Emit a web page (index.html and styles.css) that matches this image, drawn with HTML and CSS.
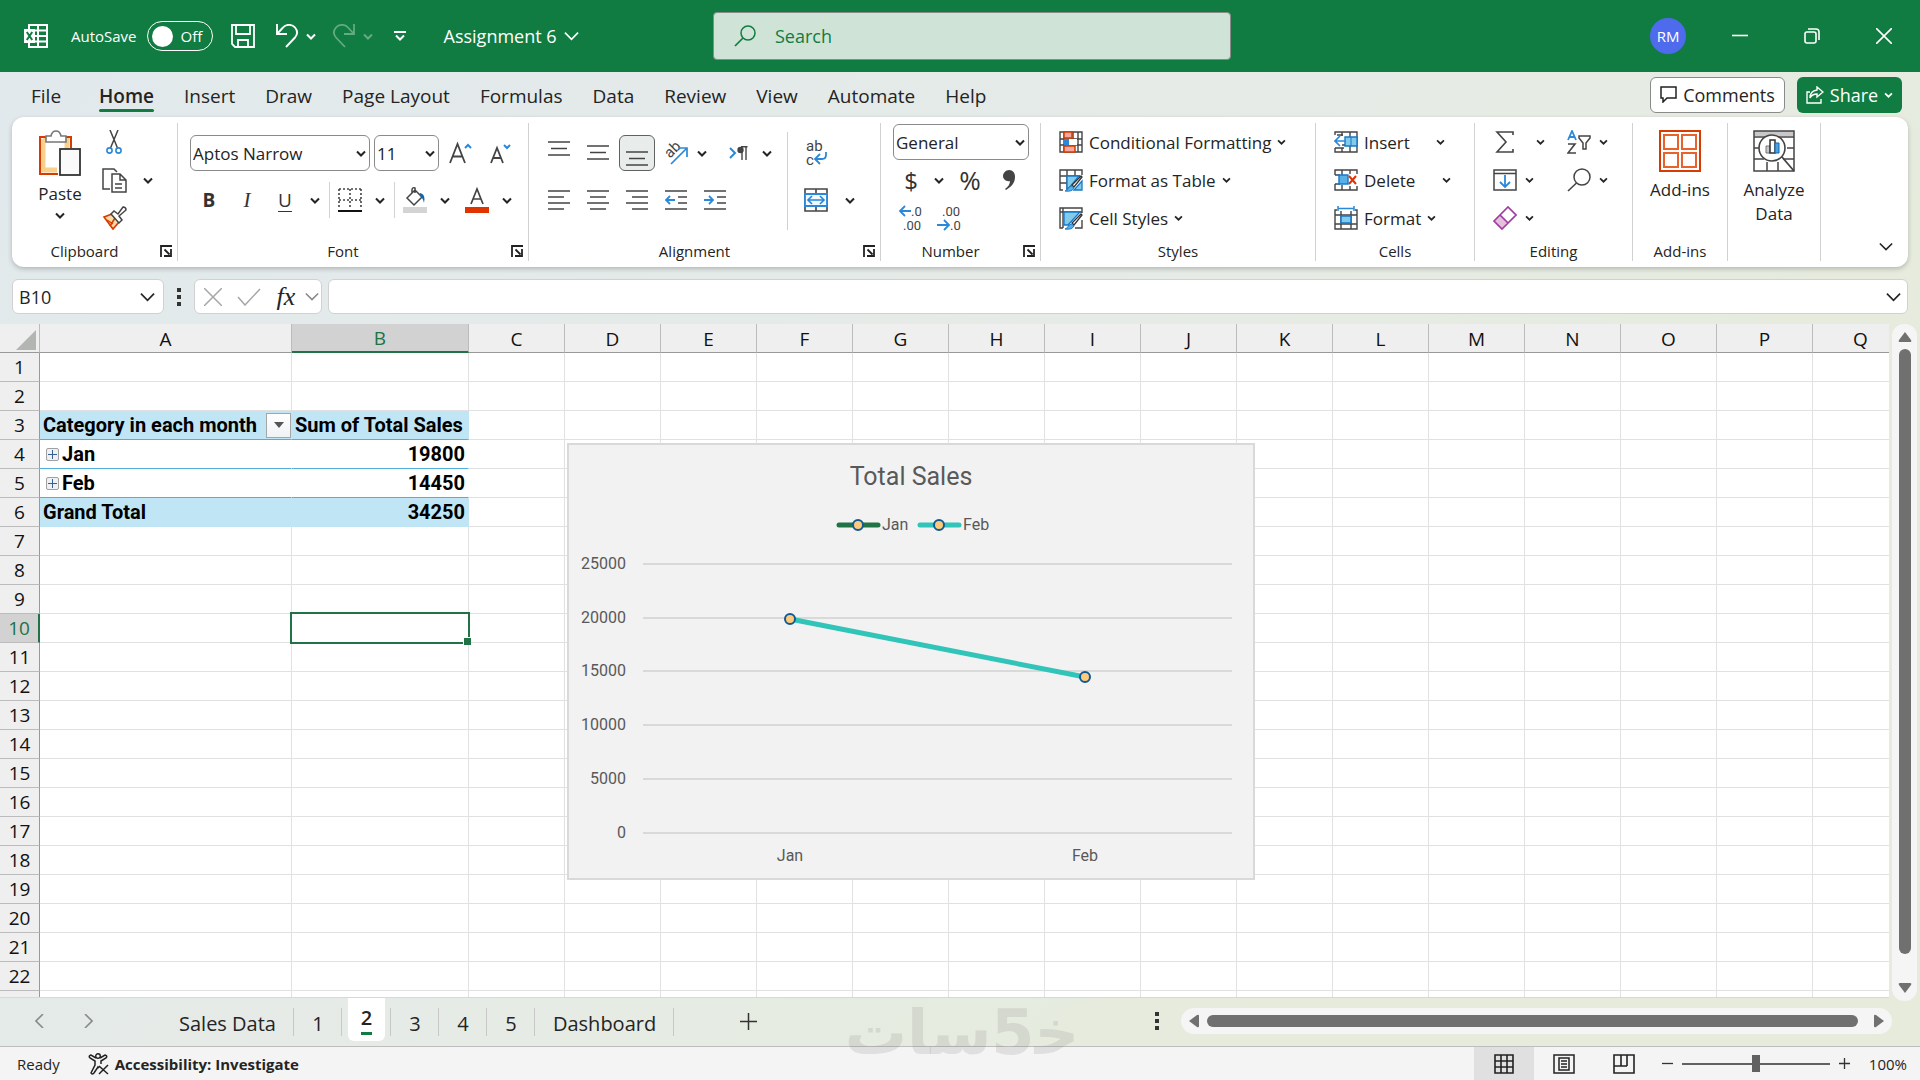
FILE: index.html
```html
<!DOCTYPE html>
<html lang="en">
<head>
  <meta charset="UTF-8">
  <meta name="viewport" content="width=device-width, initial-scale=1.0">
  <title>Assignment 6 - Excel</title>
  <link rel="stylesheet" href="styles.css">
</head>
<body>
  <!-- Shared icons -->
  <svg class="sprite" aria-hidden="true">
    <symbol id="chev" viewBox="0 0 10 7"><path d="M1 1.5l4 4 4-4" fill="none" stroke="currentColor" stroke-width="2"/></symbol>
    <symbol id="chev-big" viewBox="0 0 16 10"><path d="M1 1.5l7 7 7-7" fill="none" stroke="currentColor" stroke-width="1.8"/></symbol>
    <symbol id="launcher" viewBox="0 0 12 12"><path d="M1 12V1h11M4.5 4.5l5 5M11 4v7H4" fill="none" stroke="#222" stroke-width="1.8"/></symbol>
  </svg>

  <header class="title-bar">
    <div class="title-left">
      <svg class="excel-logo" width="24" height="24" viewBox="0 0 24 24"><path d="M5 1h18v22H5zM5 6.500h18M5 12h18M5 17.500h18M14 1v22" fill="none" stroke="#fff" stroke-width="2"/><path d="M0 5h11v14H0z" fill="#fff"/><path d="M2.800 8l5.400 8M8.200 8l-5.400 8" stroke="#107c41" stroke-width="2"/></svg>
      <label class="autosave">AutoSave
        <input type="checkbox" class="toggle-input">
        <span class="toggle"><span class="knob"></span>Off</span>
      </label>
      <button class="title-btn" aria-label="Save"><svg width="24" height="24" viewBox="0 0 24 24"><path d="M1 1h22v22H4l-3-3zM5 1v9h14V1M7 23v-7h10v7" fill="none" stroke="#fff" stroke-width="1.800"/></svg></button>
      <span class="title-split">
        <button class="title-btn" aria-label="Undo"><svg width="24" height="24" viewBox="0 0 24 24"><path d="M2 0v10h10M2 10l6-6.500C11 0 17 0 20 3.500s2.500 7 0 10L11 23" fill="none" stroke="#fff" stroke-width="1.900"/></svg></button>
        <button class="chev-btn" aria-label="Undo list"><svg width="10" height="7"><use href="#chev"/></svg></button>
      </span>
      <span class="title-split faded">
        <button class="title-btn" aria-label="Redo"><svg width="24" height="24" viewBox="0 0 24 24"><path d="M22 0v10H12M22 10l-6-6.500C13 0 7 0 4 3.500s-2.500 7 0 10L13 23" fill="none" stroke="#fff" stroke-width="1.800"/></svg></button>
        <button class="chev-btn" aria-label="Redo list"><svg width="10" height="7"><use href="#chev"/></svg></button>
      </span>
      <button class="title-btn customize" aria-label="Customize toolbar"><svg width="12" height="10" viewBox="0 0 12 10"><path d="M0 1h12M2 4.500l4 4 4-4" fill="none" stroke="#fff" stroke-width="2"/></svg></button>
      <button class="doc-name">Assignment 6 <svg width="15" height="10"><use href="#chev-big"/></svg></button>
    </div>
    <label class="search">
      <svg width="22" height="22" viewBox="0 0 22 22"><circle cx="14" cy="8" r="7" fill="none" stroke="#107c41" stroke-width="1.500"/><path d="M9 13l-8 8" stroke="#107c41" stroke-width="1.700"/></svg>
      <input type="text" placeholder="Search" aria-label="Search">
    </label>
    <div class="title-right">
      <button class="avatar">RM</button>
      <button class="win-btn" aria-label="Minimize"><svg width="16" height="16" viewBox="0 0 16 16"><path d="M0 7.500h16" stroke="#fff" stroke-width="1.600"/></svg></button>
      <button class="win-btn" aria-label="Restore"><svg width="16" height="16" viewBox="0 0 16 16"><rect x="1" y="4" width="11" height="11" rx="2" fill="none" stroke="#fff" stroke-width="1.600"/><path d="M4 1h8q3 0 3 3v8" fill="none" stroke="#fff" stroke-width="1.600"/></svg></button>
      <button class="win-btn" aria-label="Close"><svg width="16" height="16" viewBox="0 0 16 16"><path d="M0 0l16 16M16 0L0 16" stroke="#fff" stroke-width="1.600"/></svg></button>
    </div>
  </header>

  <nav class="menu">
    <a href="#" class="menu-file">File</a>
    <a href="#" class="active">Home</a>
    <a href="#">Insert</a>
    <a href="#">Draw</a>
    <a href="#">Page Layout</a>
    <a href="#">Formulas</a>
    <a href="#">Data</a>
    <a href="#">Review</a>
    <a href="#">View</a>
    <a href="#">Automate</a>
    <a href="#">Help</a>
    <div class="menu-actions">
      <button class="comments"><svg width="17" height="17" viewBox="0 0 17 17"><path d="M1 1h15v11H7l-4 4v-4H1z" fill="none" stroke="#222" stroke-width="1.500"/></svg>Comments</button>
      <button class="share"><svg width="18" height="18" viewBox="0 0 18 18"><path d="M4 6H1v11h14v-4M11 1l6 5-6 5V8Q6 8 4 12q0-7 7-8z" fill="none" stroke="#fff" stroke-width="1.400"/></svg>Share<svg width="9" height="6"><use href="#chev"/></svg></button>
    </div>
  </nav>

  <section class="ribbon">
    <div class="group g-clipboard">
      <div class="body">
        <button class="big paste">
          <svg width="42" height="46" viewBox="0 0 42 46"><path d="M4 9h24v10M4 9v31h14" fill="none" stroke="#f8d08a" stroke-width="5"/><path d="M8 7H1v37h18M25 7h7v11" fill="none" stroke="#d83b01" stroke-width="2"/><path d="M7 12V6h5q1-5 5-5t5 5h5v6z" fill="#fff" stroke="#777" stroke-width="1.600"/><rect x="21" y="19" width="20" height="26" fill="#fafafa" stroke="#333" stroke-width="1.800"/></svg>
          <span>Paste</span>
          <svg width="10" height="7"><use href="#chev"/></svg>
        </button>
        <div class="stack">
          <button class="tool" aria-label="Cut"><svg width="16" height="24" viewBox="0 0 16 24"><path d="M4 0l7.500 18M12 0L4.500 18" stroke="#444" stroke-width="1.500"/><circle cx="3.500" cy="20.500" r="2.600" fill="none" stroke="#2b88d8" stroke-width="1.600"/><circle cx="12.500" cy="20.500" r="2.600" fill="none" stroke="#2b88d8" stroke-width="1.600"/></svg></button>
          <button class="tool" aria-label="Copy"><svg width="25" height="25" viewBox="0 0 25 25"><path d="M8 21H1V1h11l3 3" fill="none" stroke="#444" stroke-width="1.500"/><path d="M10 6h8l6 6v12H10zM18 6v6h6M13 16h7M13 20h7" fill="none" stroke="#444" stroke-width="1.500"/></svg></button>
          <button class="tool" aria-label="Format painter"><svg width="25" height="24" viewBox="0 0 25 24"><path d="M2 11l8-3 7 8-6 7z" fill="#fbdba8" stroke="#d83b01" stroke-width="1.700"/><path d="M5 14l6 4M8 20l5-8" stroke="#d83b01" stroke-width="1.500"/><path d="M9 8l3-3 4 3 5-7q3 0 3 3l-7 6 3 4-3 3z" fill="#fff" stroke="#444" stroke-width="1.500"/></svg></button>
        </div>
        <button class="chev-btn wide" aria-label="Copy options"><svg width="10" height="7"><use href="#chev"/></svg></button>
      </div>
      <div class="caption"><span>Clipboard</span><button class="launch" aria-label="Clipboard settings"><svg width="12" height="12"><use href="#launcher"/></svg></button></div>
    </div>

    <div class="group g-font">
      <div class="body two-rows">
        <div class="row font-top">
          <span class="combo font-name"><select aria-label="Font"><option>Aptos Narrow</option></select><svg width="10" height="7"><use href="#chev"/></svg></span>
          <span class="combo font-size"><select aria-label="Font size"><option>11</option></select><svg width="10" height="7"><use href="#chev"/></svg></span>
          <button class="tool" aria-label="Increase font size"><svg width="24" height="24" viewBox="0 0 24 24"><path d="M1 22L8.500 3 16 22M4 15.500h9" fill="none" stroke="#444" stroke-width="1.800"/><path d="M16 7l3-3 3 3" fill="none" stroke="#2b88d8" stroke-width="2"/></svg></button>
          <button class="tool" aria-label="Decrease font size"><svg width="22" height="24" viewBox="0 0 22 24"><path d="M1 22L7 7l6 15M3.500 17h7" fill="none" stroke="#444" stroke-width="1.800"/><path d="M14 4l3 3 3-3" fill="none" stroke="#2b88d8" stroke-width="2"/></svg></button>
        </div>
        <div class="row font-bottom">
          <button class="tool glyph bold">B</button>
          <button class="tool glyph italic">I</button>
          <span class="split"><button class="tool glyph under">U</button><button class="chev-btn" aria-label="Underline options"><svg width="10" height="7"><use href="#chev"/></svg></button></span>
          <span class="divider"></span>
          <span class="split"><button class="tool" aria-label="Borders"><svg width="24" height="24" viewBox="0 0 24 24"><path d="M1 1h22M1 12h22M1 1v20M12 1v20M23 1v20" fill="none" stroke="#444" stroke-width="1.600" stroke-dasharray="2 2"/><path d="M0 23h24" stroke="#111" stroke-width="2"/></svg></button><button class="chev-btn" aria-label="Border options"><svg width="10" height="7"><use href="#chev"/></svg></button></span>
          <span class="divider"></span>
          <span class="split"><button class="tool" aria-label="Fill color"><svg width="24" height="26" viewBox="0 0 24 26"><path d="M4 11l8-8 7 7-8 8zM9 6V3q0-3 3-2v5" fill="none" stroke="#444" stroke-width="1.500"/><path d="M17 6q6 1 4 10q-1-5-4-7z" fill="#1565a8"/><path d="M0 20h24v6H0z" fill="#d4d4d4"/></svg></button><button class="chev-btn" aria-label="Fill options"><svg width="10" height="7"><use href="#chev"/></svg></button></span>
          <span class="split"><button class="tool" aria-label="Font color"><svg width="24" height="26" viewBox="0 0 24 26"><path d="M6 17l6-15 6 15M8 12h8" fill="none" stroke="#444" stroke-width="1.700"/><path d="M0 20h24v6H0z" fill="#e03400"/></svg></button><button class="chev-btn" aria-label="Font color options"><svg width="10" height="7"><use href="#chev"/></svg></button></span>
        </div>
      </div>
      <div class="caption"><span>Font</span><button class="launch" aria-label="Font settings"><svg width="12" height="12"><use href="#launcher"/></svg></button></div>
    </div>

    <div class="group g-align">
      <div class="body">
        <div class="align-rows">
          <div class="row">
            <button class="tool" aria-label="Top align"><svg width="22" height="26" viewBox="0 0 22 26"><path d="M0 2h22M3 8.500h16M0 15h22" stroke="#444" stroke-width="1.600"/></svg></button>
            <button class="tool" aria-label="Middle align"><svg width="22" height="26" viewBox="0 0 22 26"><path d="M0 6h22M3 12.500h16M0 19h22" stroke="#444" stroke-width="1.600"/></svg></button>
            <button class="tool pressed" aria-label="Bottom align"><svg width="22" height="26" viewBox="0 0 22 26"><path d="M0 12h22M3 18.500h16M0 25h22" stroke="#444" stroke-width="1.600"/></svg></button>
            <span class="split"><button class="tool" aria-label="Orientation"><svg width="32" height="32" viewBox="0 0 32 32"><text x="5" y="18" class="icon-text" transform="rotate(-45 12 14)">ab</text><path d="M11 27L26 12M18 11h9v9" fill="none" stroke="#2b88d8" stroke-width="1.700"/></svg></button><button class="chev-btn slim" aria-label="Orientation options"><svg width="10" height="7"><use href="#chev"/></svg></button></span>
            <span class="split direction"><button class="tool" aria-label="Text direction"><svg width="20" height="16" viewBox="0 0 20 16"><path d="M1 3l5 5-5 5" fill="none" stroke="#2b88d8" stroke-width="2"/><path d="M13 2v13M17 2v13M18.500 1.800H12" stroke="#444" stroke-width="1.400"/><circle cx="11.500" cy="5" r="3.200" fill="#444"/></svg></button><button class="chev-btn narrow" aria-label="Direction options"><svg width="10" height="7"><use href="#chev"/></svg></button></span>
          </div>
          <div class="row">
            <button class="tool" aria-label="Align left"><svg width="22" height="22" viewBox="0 0 22 22"><path d="M0 2h22M0 8h16M0 14h22M0 20h16" stroke="#444" stroke-width="1.600"/></svg></button>
            <button class="tool" aria-label="Center"><svg width="22" height="22" viewBox="0 0 22 22"><path d="M0 2h22M3 8h16M0 14h22M3 20h16" stroke="#444" stroke-width="1.600"/></svg></button>
            <button class="tool" aria-label="Align right"><svg width="22" height="22" viewBox="0 0 22 22"><path d="M0 2h22M6 8h16M0 14h22M6 20h16" stroke="#444" stroke-width="1.600"/></svg></button>
            <button class="tool" aria-label="Decrease indent"><svg width="22" height="22" viewBox="0 0 22 22"><path d="M0 2h22M13 8h9M13 14h9M0 20h22" stroke="#444" stroke-width="1.600"/><path d="M10 11H1M5 7l-4 4 4 4" fill="none" stroke="#2b88d8" stroke-width="1.800"/></svg></button>
            <button class="tool" aria-label="Increase indent"><svg width="22" height="22" viewBox="0 0 22 22"><path d="M0 2h22M13 8h9M13 14h9M0 20h22" stroke="#444" stroke-width="1.600"/><path d="M0 11h9M5 7l4 4-4 4" fill="none" stroke="#2b88d8" stroke-width="1.800"/></svg></button>
          </div>
        </div>
        <span class="divider tall"></span>
        <div class="align-rows">
          <div class="row">
            <button class="tool" aria-label="Wrap text"><svg width="24" height="34" viewBox="0 0 24 34"><text x="2" y="15" class="icon-text">ab</text><text x="2" y="29" class="icon-text">c</text><path d="M22 16v3q0 4-4 4h-7M16 18l-5 5 5 5" fill="none" stroke="#2b88d8" stroke-width="1.800"/></svg></button>
          </div>
          <div class="row">
            <span class="split"><button class="tool" aria-label="Merge"><svg width="24" height="24" viewBox="0 0 24 24"><path d="M1 1h22v22H1zM12 1v22" fill="none" stroke="#444" stroke-width="1.600"/><path d="M1 6h22v12H1z" fill="#f2f9fe" stroke="#2b88d8" stroke-width="1.800"/><path d="M4 12h16M8 8l-4 4 4 4M16 8l4 4-4 4" fill="none" stroke="#2b88d8" stroke-width="1.700"/></svg></button><button class="chev-btn wide" aria-label="Merge options"><svg width="10" height="7"><use href="#chev"/></svg></button></span>
          </div>
        </div>
      </div>
      <div class="caption"><span>Alignment</span><button class="launch" aria-label="Alignment settings"><svg width="12" height="12"><use href="#launcher"/></svg></button></div>
    </div>

    <div class="group g-number">
      <div class="body three-rows">
        <div class="row">
          <span class="combo number-format"><select aria-label="Number format"><option>General</option></select><svg width="10" height="7"><use href="#chev"/></svg></span>
        </div>
        <div class="row">
          <span class="split"><button class="tool glyph symbol">$</button><button class="chev-btn narrow" aria-label="Currency options"><svg width="10" height="7"><use href="#chev"/></svg></button></span>
          <button class="tool glyph symbol percent">%</button>
          <button class="tool" aria-label="Comma style"><svg width="12" height="20" viewBox="0 0 12 20"><path d="M6 0c4 0 6 3 6 7 0 6-4 10-9 13l-1-1c3-2 5-5 5-8C3 12 0 9 0 6s3-6 6-6z" fill="#444"/></svg></button>
        </div>
        <div class="row">
          <button class="tool" aria-label="Increase decimal"><svg width="26" height="32" viewBox="0 0 26 32"><text x="13" y="14" class="digit-text">.0</text><text x="5" y="28" class="digit-text">.00</text><path d="M13 9H2M7 4L2 9l5 5" fill="none" stroke="#2b88d8" stroke-width="1.800"/></svg></button>
          <button class="tool" aria-label="Decrease decimal"><svg width="26" height="32" viewBox="0 0 26 32"><text x="5" y="14" class="digit-text">.00</text><text x="13" y="28" class="digit-text">.0</text><path d="M0 23h12M7 18l5 5-5 5" fill="none" stroke="#2b88d8" stroke-width="1.800"/></svg></button>
        </div>
      </div>
      <div class="caption"><span>Number</span><button class="launch" aria-label="Number settings"><svg width="12" height="12"><use href="#launcher"/></svg></button></div>
    </div>

    <div class="group g-styles">
      <div class="body three-rows">
        <button class="line-btn"><svg width="24" height="22" viewBox="0 0 24 22"><path d="M1 1h22v20H1zM1 8h22M1 14h22M5 1v20M14 1v20M19 1v20" fill="none" stroke="#444" stroke-width="1.400"/><path d="M5 8h5v6H5z" fill="#2b88d8"/><path d="M10 8h8v6h-8z" fill="#fff"/><path d="M5 1h8v6H5zM5 15h11v6H5z" fill="#f7a8a0" stroke="#d83b01" stroke-width="1.500"/></svg><span>Conditional Formatting</span><svg width="9" height="6"><use href="#chev"/></svg></button>
        <button class="line-btn"><svg width="24" height="23" viewBox="0 0 24 23"><path d="M4 21H1V1h22v5M1 7h20M1 14h8M8 1v20M16 1v6" fill="none" stroke="#444" stroke-width="1.400"/><path d="M8 7h12L10 19H8zM23 12v9h-8z" fill="#83cbeb" stroke="#1878c8" stroke-width="1.300"/><path d="M22 7l-9 9 2 2 8-10z" fill="#fff" stroke="#333" stroke-width="1.300"/><path d="M6 22q3-1 4-4 3-2 5 1-2 4-9 3z" fill="#57b0e8" stroke="#1878c8"/></svg><span>Format as Table</span><svg width="9" height="6"><use href="#chev"/></svg></button>
        <button class="line-btn"><svg width="24" height="23" viewBox="0 0 24 23"><path d="M4 21H1V1h22v5M23 13v8h-7M1 5h22M4 1v20" fill="none" stroke="#444" stroke-width="1.400"/><path d="M5 5h16L9 18H5z" fill="#83cbeb" stroke="#1878c8" stroke-width="1.300"/><path d="M22 7l-9 9 2 2 8-10z" fill="#fff" stroke="#333" stroke-width="1.300"/><path d="M6 22q3-1 4-4 3-2 5 1-2 4-9 3z" fill="#57b0e8" stroke="#1878c8"/></svg><span>Cell Styles</span><svg width="9" height="6"><use href="#chev"/></svg></button>
      </div>
      <div class="caption"><span>Styles</span></div>
    </div>

    <div class="group g-cells">
      <div class="body three-rows">
        <span class="split"><button class="line-btn"><svg width="24" height="22" viewBox="0 0 24 22"><path d="M1 4V1h22v20H1v-4M8 1v4M8 17v4M16 1v20M8 14h15M1 17h9M3 4h6" fill="none" stroke="#444" stroke-width="1.400"/><path d="M11 6h12v9H11z" fill="#83cbeb" stroke="#1878c8" stroke-width="1.400"/><path d="M17 6v9" stroke="#1878c8"/><path d="M12 10H1M6 5l-5 5 5 5" fill="none" stroke="#2b88d8" stroke-width="1.700"/></svg><span>Insert</span></button><button class="chev-btn cell-chev" aria-label="Insert options"><svg width="9" height="6"><use href="#chev"/></svg></button></span>
        <span class="split"><button class="line-btn"><svg width="24" height="22" viewBox="0 0 24 22"><path d="M1 6V1h22v4M1 15v6h22v-4M1 6h5M1 15h5M8 1v5M8 16v5M16 1v4M16 17v4" fill="none" stroke="#444" stroke-width="1.400"/><path d="M5 6h9v9H5z" fill="#57b0e8" stroke="#1878c8" stroke-width="1.400"/><path d="M15 7l7 8M22 7l-7 8" stroke="#e03400" stroke-width="2"/></svg><span>Delete</span></button><button class="chev-btn cell-chev" aria-label="Delete options"><svg width="9" height="6"><use href="#chev"/></svg></button></span>
        <button class="line-btn"><svg width="24" height="24" viewBox="0 0 24 24"><path d="M3 4H1v19h22V4h-2M1 9h22M1 18h22M7 5v18M17 5v18" fill="none" stroke="#444" stroke-width="1.400"/><path d="M7 10h10v7H7z" fill="#83cbeb" stroke="#1878c8" stroke-width="1.500"/><path d="M4 0v5M20 0v5M4 2.500h16" stroke="#2b88d8" stroke-width="1.500"/></svg><span>Format</span><svg width="9" height="6"><use href="#chev"/></svg></button>
      </div>
      <div class="caption"><span>Cells</span></div>
    </div>

    <div class="group g-editing">
      <div class="body editing-grid">
        <span class="split"><button class="edit-tool" aria-label="AutoSum"><svg width="24" height="22" viewBox="0 0 24 22"><path d="M20 4V1H4l9 10-9 10h16v-3" fill="none" stroke="#444" stroke-width="1.600"/></svg></button><button class="chev-btn sum-chev" aria-label="AutoSum options"><svg width="9" height="6"><use href="#chev"/></svg></button></span>
        <span class="split"><button class="edit-tool" aria-label="Sort and filter"><svg width="24" height="24" viewBox="0 0 24 24"><path d="M1 10L5 1l4 9M2.500 7h5" fill="none" stroke="#2b88d8" stroke-width="1.800"/><path d="M1 14h7l-7 9h8" fill="none" stroke="#444" stroke-width="1.600"/><path d="M12 6h11v2l-4 5v6h-3v-6l-4-5z" fill="none" stroke="#444" stroke-width="1.500"/></svg></button><button class="chev-btn" aria-label="Sort options"><svg width="9" height="6"><use href="#chev"/></svg></button></span>
        <span class="split"><button class="edit-tool" aria-label="Fill"><svg width="24" height="22" viewBox="0 0 24 22"><path d="M1 1h22v20H1zM1 4.500h22" fill="none" stroke="#444" stroke-width="1.500"/><path d="M12 6v12M7 13l5 5 5-5" fill="none" stroke="#2b88d8" stroke-width="1.800"/></svg></button><button class="chev-btn" aria-label="Fill options"><svg width="9" height="6"><use href="#chev"/></svg></button></span>
        <span class="split"><button class="edit-tool" aria-label="Find"><svg width="24" height="24" viewBox="0 0 24 24"><circle cx="15" cy="9" r="8" fill="none" stroke="#444" stroke-width="1.500"/><path d="M9.500 15L1 23" stroke="#444" stroke-width="1.600"/></svg></button><button class="chev-btn" aria-label="Find options"><svg width="9" height="6"><use href="#chev"/></svg></button></span>
        <span class="split"><button class="edit-tool" aria-label="Clear"><svg width="24" height="24" viewBox="0 0 24 24"><path d="M1 15l7-6 7 7-7 7z" fill="#e3c0dc"/><path d="M1 15L15 1l8 8L9 23zM7 9l8 8" fill="none" stroke="#a23ba0" stroke-width="1.700"/></svg></button><button class="chev-btn" aria-label="Clear options"><svg width="9" height="6"><use href="#chev"/></svg></button></span>
      </div>
      <div class="caption"><span>Editing</span></div>
    </div>

    <div class="group g-addins">
      <div class="body">
        <button class="big">
          <svg width="42" height="42" viewBox="0 0 42 42"><path d="M1 1h40v40H1z" fill="none" stroke="#d83b01" stroke-width="2"/><path d="M5 5h14v14H5zM23 5h14v14H23zM5 23h14v14H5zM23 23h14v14H23z" fill="#fff" stroke="#e8622c" stroke-width="2"/></svg>
          <span>Add-ins</span>
        </button>
      </div>
      <div class="caption"><span>Add-ins</span></div>
    </div>

    <div class="group g-analyze">
      <div class="body">
        <button class="big">
          <svg width="42" height="42" viewBox="0 0 42 42"><path d="M1 1h40v5H1z" fill="#c8c8c8"/><path d="M1 1h40v40H1zM1 7h40M1 18h6M34 18h7M1 29h10M30 29h11M14 32v9M25 32v9" fill="none" stroke="#444" stroke-width="1.500"/><circle cx="19" cy="18" r="13" fill="#fff" stroke="#444" stroke-width="1.600"/><path d="M29 27l12 14" stroke="#444" stroke-width="1.800"/><path d="M13 16h4v7h-4z" fill="#c8c8c8" stroke="#777"/><path d="M17 10h5v13h-5z" fill="#fff" stroke="#333" stroke-width="1.500"/><path d="M22 13h4v10h-4z" fill="#4ba3e3" stroke="#1565a8"/></svg>
          <span>Analyze<br>Data</span>
        </button>
      </div>
    </div>
    <button class="collapse" aria-label="Collapse ribbon"><svg width="14" height="9"><use href="#chev-big"/></svg></button>
  </section>

  <section class="formula-bar">
    <label class="box name-box"><input type="text" value="B10" aria-label="Name box"><svg width="15" height="10"><use href="#chev-big"/></svg></label>
    <span class="kebab"><i></i><i></i><i></i></span>
    <div class="box fx-box">
      <button aria-label="Cancel"><svg width="18" height="18" viewBox="0 0 18 18"><path d="M0 0l18 18M18 0L0 18" stroke="#a6a6a6" stroke-width="1.500"/></svg></button>
      <button aria-label="Enter"><svg width="24" height="18" viewBox="0 0 24 18"><path d="M1 9l7 8L23 1" fill="none" stroke="#a6a6a6" stroke-width="1.500"/></svg></button>
      <button class="fx">fx</button>
      <svg class="grey" width="14" height="9"><use href="#chev-big"/></svg>
    </div>
    <label class="box formula"><input type="text" aria-label="Formula"><svg width="15" height="10"><use href="#chev-big"/></svg></label>
  </section>

  <main class="workspace">
    <div class="sheet">
      <table class="cells">
        <colgroup id="cols"></colgroup>
        <thead><tr id="letters"></tr></thead>
        <tbody id="rows"></tbody>
      </table>

      <svg class="chart" viewBox="0 0 688 437" role="img" aria-label="Total Sales chart">
        <rect x="1" y="1" width="686" height="435" class="chart-bg"/>
        <text x="344" y="42" class="chart-title">Total Sales</text>
        <g class="chart-key">
          <path d="M272 82h39" stroke="#217346"/>
          <circle cx="291" cy="82" r="5"/>
          <text x="315" y="87">Jan</text>
          <path d="M353 82h39" stroke="#31c4b9"/>
          <circle cx="372" cy="82" r="5"/>
          <text x="396" y="87">Feb</text>
        </g>
        <path class="chart-lines" d="M76 121h589M76 175h589M76 228h589M76 282h589M76 336h589M76 390h589"/>
        <g class="chart-values">
          <text x="59" y="126">25000</text>
          <text x="59" y="180">20000</text>
          <text x="59" y="233">15000</text>
          <text x="59" y="287">10000</text>
          <text x="59" y="341">5000</text>
          <text x="59" y="395">0</text>
        </g>
        <g class="chart-months">
          <text x="223" y="418">Jan</text>
          <text x="518" y="418">Feb</text>
        </g>
        <g class="chart-series">
          <path d="M223 176L518 234" stroke="#31c4b9"/>
          <circle cx="223" cy="176" r="5"/>
          <circle cx="518" cy="234" r="5"/>
        </g>
      </svg>
    </div>
    <div class="v-scroll">
      <svg width="14" height="10" viewBox="0 0 14 10"><path d="M7 0l6 8q1 2-1 2H2q-2 0-1-2z" fill="#707070"/></svg>
      <span class="v-thumb"></span>
      <svg width="14" height="10" viewBox="0 0 14 10"><path d="M7 10l6-8q1-2-1-2H2Q0 0 1 2z" fill="#707070"/></svg>
    </div>
  </main>

  <footer class="sheet-bar">
    <div class="sheet-arrows">
      <button aria-label="Previous sheet"><svg width="9" height="14" viewBox="0 0 9 14"><path d="M8 0L1 7l7 7" fill="none" stroke="#8a8a8a" stroke-width="1.600"/></svg></button>
      <button aria-label="Next sheet"><svg width="9" height="14" viewBox="0 0 9 14"><path d="M1 0l7 7-7 7" fill="none" stroke="#8a8a8a" stroke-width="1.600"/></svg></button>
    </div>
    <div class="sheet-tabs">
      <button>Sales Data</button>
      <button>1</button>
      <button class="current"><span>2</span></button>
      <button>3</button>
      <button>4</button>
      <button>5</button>
      <button>Dashboard</button>
    </div>
    <button class="add-sheet" aria-label="New sheet"><svg width="17" height="17" viewBox="0 0 17 17"><path d="M8.500 0v17M0 8.500h17" stroke="#333" stroke-width="1.500"/></svg></button>
    <span class="kebab sheet-kebab"><i></i><i></i><i></i></span>
    <div class="h-scroll">
      <svg width="10" height="14" viewBox="0 0 10 14"><path d="M0 7l8-6q2-1 2 1v10q0 2-2 1z" fill="#707070"/></svg>
      <span class="h-thumb"></span>
      <svg width="10" height="14" viewBox="0 0 10 14"><path d="M10 7L2 1Q0 0 0 2v10q0 2 2 1z" fill="#707070"/></svg>
    </div>
    <span class="watermark" lang="ar" dir="rtl">خ&zwj;5سات</span>
  </footer>

  <div class="status-bar">
    <span class="ready">Ready</span>
    <button class="access"><svg width="22" height="22" viewBox="0 0 22 22"><circle cx="10" cy="3" r="2.300" fill="none" stroke="#222" stroke-width="1.400"/><path d="M8 5L3 2Q0 3 2 5l5 3v4l-4 8q1 2 3 0l4-6 1 1M12 5l5-3q3 1 1 3l-5 3v3M11 13l9 8M20 12l-9 9" fill="none" stroke="#222" stroke-width="1.500"/></svg>Accessibility: Investigate</button>
    <div class="views">
      <button class="on" aria-label="Normal view"><svg width="20" height="20" viewBox="0 0 20 20"><path d="M1 1h18v18H1zM1 7h18M1 13h18M7 1v18M13 1v18" fill="none" stroke="#222" stroke-width="1.600"/></svg></button>
      <button aria-label="Page layout view"><svg width="22" height="20" viewBox="0 0 22 20"><path d="M1 1h20v18H1zM6 4h10v12H6zM8 7h6M8 10h6M8 13h6" fill="none" stroke="#222" stroke-width="1.500"/></svg></button>
      <button aria-label="Page break view"><svg width="22" height="20" viewBox="0 0 22 20"><path d="M1 1h20v18H1zM1 12h13M8 1v11M14 1v11" fill="none" stroke="#222" stroke-width="1.600"/></svg></button>
    </div>
    <div class="zoom">
      <button aria-label="Zoom out"><svg width="11" height="11" viewBox="0 0 11 11"><path d="M0 5.500h11" stroke="#333" stroke-width="1.300"/></svg></button>
      <input type="range" min="0" max="100" value="50" aria-label="Zoom">
      <button aria-label="Zoom in"><svg width="11" height="11" viewBox="0 0 11 11"><path d="M0 5.500h11M5.500 0v11" stroke="#333" stroke-width="1.300"/></svg></button>
      <span>100%</span>
    </div>
  </div>

  <script src="script.js"></script>
</body>
</html>
```
FILE: styles.css
```css
* {
  box-sizing: border-box;
}

body {
  margin: 0;
  height: 100vh;
  display: flex;
  flex-direction: column;
  overflow: hidden;
  font-family: "Segoe UI", "Open Sans", "Noto Sans", sans-serif;
  font-size: 18px;
  color: #242424;
  background: linear-gradient(135deg, #e1e9ed 0%, #e6ebe6 50%, #e7ebdb 80%);
}

button,
input,
select {
  font: inherit;
  color: inherit;
  background: none;
  border: none;
  padding: 0;
  margin: 0;
  outline: none;
}

button {
  display: flex;
  align-items: center;
  justify-content: center;
  white-space: nowrap;
  cursor: pointer;
}

svg {
  display: block;
  flex: none;
}

.sprite {
  position: absolute;
  width: 0;
  height: 0;
}

/* Title bar */
.title-bar {
  height: 72px;
  flex: none;
  display: grid;
  grid-template-columns: 713fr 518fr 689fr;
  align-items: center;
  background: #107c41;
  color: white;
}

.title-left {
  display: flex;
  align-items: center;
  padding-left: 24px;
}

.autosave {
  display: flex;
  align-items: center;
  gap: 10px;
  margin: 0 18px 0 23px;
  font-size: 15px;
}

.toggle-input {
  position: absolute;
  opacity: 0;
}

.toggle {
  display: flex;
  align-items: center;
  gap: 8px;
  width: 66px;
  height: 30px;
  padding-left: 4px;
  border: 1px solid white;
  border-radius: 15px;
}

.knob {
  width: 21px;
  height: 21px;
  border-radius: 50%;
  background: white;
}

.title-btn {
  width: 24px;
  height: 36px;
}

.title-split {
  display: flex;
  margin-left: 20px;
}

.title-split + .title-split {
  margin-left: 9px;
}

.faded {
  opacity: 0.35;
}

.customize {
  margin-left: 8px;
}

.doc-name {
  gap: 7px;
  margin-left: 32px;
}

.search {
  display: flex;
  align-items: center;
  gap: 19px;
  height: 48px;
  padding: 0 20px;
  background: #cfe3d7;
  border: 1px solid #8a8a8a;
  border-radius: 4px;
}

.search input {
  flex: 1;
}

.search input::placeholder {
  color: #107c41;
  opacity: 1;
}

.title-right {
  display: flex;
  align-items: center;
  justify-content: flex-end;
}

.avatar {
  width: 36px;
  height: 36px;
  margin-right: 18px;
  border-radius: 50%;
  background: #4f6bed;
  font-size: 15px;
}

.win-btn {
  width: 72px;
  height: 72px;
}

/* Menu */
.menu {
  display: flex;
  align-items: center;
  gap: 30px;
  height: 45px;
  flex: none;
  padding: 0 18px 0 31px;
}

.menu a {
  position: relative;
  padding: 9px 0 7px;
  line-height: 28px;
  font-size: 19px;
  color: #242424;
  text-decoration: none;
}

.menu-file {
  margin-right: 8px;
}

.menu a.active {
  font-weight: 600;
}

.menu a.active::after {
  content: "";
  position: absolute;
  left: 0;
  right: 0;
  bottom: 5px;
  height: 3px;
  border-radius: 2px;
  background: #107c41;
}

.menu-actions {
  display: flex;
  gap: 12px;
  margin-left: auto;
}

.comments,
.share {
  height: 36px;
  gap: 6px;
  border-radius: 6px;
}

.comments {
  width: 135px;
  background: white;
  border: 1px solid #8a8a8a;
}

.share {
  width: 105px;
  background: #107c41;
  color: white;
}

/* Ribbon */
.ribbon {
  display: flex;
  flex: none;
  margin: 0 12px;
  padding: 6px 0;
  background: white;
  border-radius: 12px;
  box-shadow: 0 2px 5px rgba(0, 0, 0, 0.22);
  font-size: 17px;
}

.group {
  display: flex;
  flex-direction: column;
  flex: none;
  border-right: 1px solid #d1d1d1;
}

.g-clipboard { width: 166px; padding-left: 12px; }
.g-font { width: 351px; padding-left: 12px; }
.g-align { width: 352px; padding-left: 12px; }
.g-number { width: 160px; padding-left: 12px; }
.g-styles { width: 275px; }
.g-cells { width: 159px; }
.g-editing { width: 158px; }
.g-addins { width: 95px; }
.g-analyze { width: 93px; }

.body {
  display: flex;
  height: 114px;
}

.g-styles .body,
.g-cells .body,
.g-editing .body {
  padding-left: 18px;
}

.caption {
  display: flex;
  align-items: center;
  height: 20px;
  margin: 4px 0 0;
  font-size: 15px;
}

.caption span {
  flex: 1;
  text-align: center;
}

.launch {
  width: 20px;
  padding-right: 2px;
}

.g-clipboard .caption,
.g-font .caption,
.g-align .caption,
.g-number .caption {
  margin-left: -12px;
}

.stack,
.three-rows,
.two-rows {
  display: flex;
  flex-direction: column;
}

.two-rows,
.align-rows {
  padding-top: 12px;
  gap: 11px;
}

.align-rows {
  display: flex;
  flex-direction: column;
}

.row,
.split {
  display: flex;
  align-items: center;
}

.row {
  gap: 3px;
}

.font-top {
  gap: 4px;
}

.font-bottom {
  gap: 2px;
  padding-left: 1px;
}

.three-rows > * {
  height: 38px;
}

.tool {
  width: 36px;
  height: 36px;
  flex: none;
}

.stack .tool {
  height: 38px;
}

.pressed {
  background: #e8eceb;
  border: 1px solid #616161;
  border-radius: 6px;
}

.glyph {
  font-size: 19px;
  color: #333;
}

.bold {
  font-weight: 700;
}

.italic {
  font-family: "Liberation Serif", serif;
  font-size: 21px;
  font-style: italic;
}

.under {
  text-decoration: underline;
  text-underline-offset: 4px;
}

.symbol {
  font-size: 24px;
}

.percent {
  font-size: 26px;
}

.chev-btn {
  width: 24px;
  height: 36px;
  flex: none;
}

.narrow {
  width: 20px;
}

.slim {
  width: 16px;
}

.wide {
  width: 32px;
}

.g-clipboard .chev-btn {
  align-self: center;
}

.direction {
  margin-left: 8px;
}

.divider {
  width: 1px;
  height: 36px;
  background: #d1d1d1;
}

.divider.tall {
  height: 98px;
  margin: 9px 10px 0;
}

.combo {
  position: relative;
  display: block;
  height: 36px;
}

.combo select {
  width: 100%;
  height: 100%;
  padding-left: 2px;
  appearance: none;
  border: 1px solid #8a8a8a;
  border-radius: 6px;
}

/* Arrow drawn over the select */
.combo svg {
  position: absolute;
  right: 4px;
  top: 15px;
  pointer-events: none;
}

.font-name { width: 180px; }
.font-size { width: 65px; }
.number-format { width: 136px; }

.icon-text {
  font-family: Roboto, sans-serif;
  font-size: 15px;
  fill: #444;
}

.digit-text {
  font-family: Roboto, sans-serif;
  font-size: 13px;
  fill: #444;
}

.line-btn {
  gap: 6px;
  justify-content: flex-start;
}

.cell-chev {
  width: 62px;
}

.editing-grid {
  display: grid;
  grid-template-columns: 74px 1fr;
  grid-template-rows: 38px 38px 38px;
}

.edit-tool {
  width: 24px;
  height: 36px;
}

.sum-chev {
  width: 46px;
}

.big {
  flex-direction: column;
  justify-content: flex-start;
  gap: 6px;
  width: 100%;
  padding-top: 7px;
  line-height: 24px;
}

.big.paste {
  width: 72px;
  gap: 6px;
}

.collapse {
  margin-left: auto;
  align-self: flex-end;
  width: 44px;
  height: 30px;
}

/* Formula bar */
.formula-bar {
  display: flex;
  align-items: center;
  flex: none;
  padding: 12px 12px 10px;
}

.box {
  display: flex;
  align-items: center;
  height: 35px;
  background: white;
  border: 1px solid #d1d1d1;
  border-radius: 6px;
}

.name-box {
  width: 152px;
  padding: 0 8px 0 6px;
}

.box input {
  flex: 1;
  min-width: 0;
}

.kebab {
  display: flex;
  flex-direction: column;
  align-items: center;
  gap: 3px;
  width: 30px;
}

.kebab i {
  width: 4px;
  height: 4px;
  background: #333;
}

.fx-box {
  width: 128px;
  padding: 0 2px 0 9px;
  gap: 15px;
  margin-right: 6px;
}

.fx {
  width: 22px;
  margin-right: -6px;
  font-family: "Liberation Serif", serif;
  font-size: 26px;
  font-style: italic;
}

.grey {
  color: #8a8a8a;
}

.formula {
  flex: 1;
  padding: 0 6px;
}

/* Sheet */
.workspace {
  display: flex;
  flex: 1;
  min-height: 0;
  gap: 3px;
  padding-right: 3px;
}

.sheet {
  position: relative;
  flex: 1;
  min-width: 0;
  overflow: hidden;
  background: white;
  border-bottom: 1px solid #d8d8d8;
}

.cells {
  table-layout: fixed;
  width: 0;
  border-collapse: separate;
  border-spacing: 0;
}

.col-head { width: 40px; }
.col-a { width: 252px; }
.col-b { width: 177px; }
.col { width: 96px; }

.cells th,
.cells td {
  height: 29px;
  padding: 0;
  border-right: 1px solid #e1e1e1;
  border-bottom: 1px solid #e1e1e1;
  line-height: 27px;
  white-space: nowrap;
}

.cells th {
  background: #efefef;
  font-size: 19px;
  font-weight: 400;
  color: #111;
}

.cells thead th {
  padding-top: 1px;
  line-height: 26px;
  border-right-color: #bcbcbc;
  border-bottom-color: #999;
}

.cells tbody th {
  border-right-color: #999;
  border-bottom-color: #bcbcbc;
}

.cells .corner svg {
  margin: 3px 0 0 16px;
}

.cells th.selected {
  background: #d2d2d2;
  color: #217346;
}

.cells thead th.selected {
  border-bottom: 2px solid #217346;
}

.cells tbody th.selected {
  border-right: 2px solid #217346;
}

.cells td {
  padding: 0 3px;
  font-family: "Aptos Narrow", Roboto, sans-serif;
  font-size: 20px;
  font-weight: 700;
  color: black;
}

.cells td.pivot {
  border-right-color: transparent;
  border-bottom-color: #4fb0dc;
}

.cells td.band {
  background: #c0e6f5;
}

.cells td.total {
  border-bottom-color: #c0e6f5;
}

.cells td.number {
  text-align: right;
}

.cell-flex {
  display: flex;
  align-items: center;
}

.filter {
  width: 25px;
  height: 25px;
  margin: 0 -3px 0 auto;
  background: linear-gradient(white, #f0f2f4);
  border: 1px solid #a6a6a6;
}

.expand {
  width: 13px;
  height: 13px;
  margin: 0 3px;
  background: #edf1f5;
  border: 1px solid #a0a0a0;
  border-radius: 2px;
}

.cells td.cursor {
  position: relative;
}

.cursor::before {
  content: "";
  position: absolute;
  inset: -2px;
  border: 2px solid #217346;
}

.cursor::after {
  content: "";
  position: absolute;
  right: -3px;
  bottom: -3px;
  width: 7px;
  height: 7px;
  background: #217346;
  border: solid white;
  border-width: 1px 0 0 1px;
}

/* Chart floats over the cells */
.chart {
  position: absolute;
  left: 567px;
  top: 119px;
  width: 688px;
  height: 437px;
  font-family: "Aptos Narrow", Roboto, sans-serif;
  font-size: 16px;
  fill: #595959;
}

.chart-bg {
  fill: #f2f2f2;
  stroke: #d9d9d9;
  stroke-width: 2;
}

.chart-title {
  font-size: 25px;
  text-anchor: middle;
}

.chart-lines {
  stroke: #d9d9d9;
  stroke-width: 2;
}

.chart-values {
  text-anchor: end;
}

.chart-months {
  text-anchor: middle;
}

.chart-key path,
.chart-series path {
  stroke-width: 5;
  stroke-linecap: round;
}

.chart circle {
  fill: #ffcb7a;
  stroke: #0f5a94;
  stroke-width: 2;
}

.v-scroll {
  display: flex;
  flex-direction: column;
  align-items: center;
  gap: 7px;
  width: 25px;
  margin-bottom: -3px;
  padding: 8px 0;
  background: #f5f5f5;
  border-radius: 12px;
}

.v-thumb {
  width: 12px;
  flex: 1;
  margin-bottom: 22px;
  border-radius: 6px;
  background: #707070;
}

/* Sheet tabs */
.sheet-bar {
  position: relative;
  display: flex;
  flex: none;
  height: 49px;
  border-bottom: 1px solid #bdbdbd;
}

.sheet-arrows {
  display: flex;
  gap: 40px;
  height: 46px;
  padding-left: 35px;
  margin-right: 68px;
}

.sheet-tabs {
  display: flex;
  font-size: 20px;
}

.sheet-tabs button {
  position: relative;
  height: 50px;
  min-width: 48px;
  padding: 0 18px;
}

.sheet-tabs button::after {
  content: "";
  position: absolute;
  right: 0;
  top: 10px;
  height: 28px;
  border-right: 1px solid #c8c8c8;
}

.sheet-tabs button.current {
  width: 37px;
  min-width: 0;
  height: 43px;
  padding: 0;
  margin: 0 6px;
  background: white;
  border-radius: 0 0 6px 6px;
  font-weight: 600;
}

.sheet-tabs button.current::after {
  right: -6px;
}

.current span {
  line-height: 28px;
  border-bottom: 3px solid #107c41;
}

.add-sheet {
  width: 40px;
  height: 46px;
  margin-left: 54px;
}

.sheet-kebab {
  height: 46px;
  justify-content: center;
  margin-left: auto;
}

.h-scroll {
  display: flex;
  align-items: center;
  gap: 8px;
  flex: 0 1 711px;
  height: 26px;
  margin: 10px 28px 0 9px;
  padding: 0 8px;
  background: #f5f5f5;
  border-radius: 13px;
}

.h-thumb {
  flex: 1;
  height: 12px;
  margin-right: 8px;
  border-radius: 6px;
  background: #707070;
}

/* Site mark laid over both bottom bars */
.watermark {
  position: absolute;
  left: 44%;
  top: 0;
  z-index: 1;
  font-family: "DejaVu Sans", sans-serif;
  font-size: 62px;
  font-weight: 700;
  line-height: 70px;
  color: rgba(120, 120, 120, 0.16);
  pointer-events: none;
}

/* Status bar */
.status-bar {
  display: flex;
  align-items: center;
  flex: none;
  height: 33px;
  padding: 0 13px 0 17px;
  background: #f4f4f4;
  font-size: 15px;
}

.access {
  gap: 5px;
  margin-left: 28px;
  font-weight: 700;
}

.views {
  display: flex;
  margin-left: auto;
}

.views button {
  width: 60px;
  height: 33px;
}

.views .on {
  background: #e0e0e0;
}

.zoom {
  display: flex;
  align-items: center;
  gap: 9px;
  margin-left: 8px;
}

.zoom span {
  margin-left: 10px;
}

.zoom input {
  appearance: none;
  width: 148px;
  height: 17px;
}

.zoom input::-webkit-slider-runnable-track {
  height: 2px;
  background: #616161;
}

.zoom input::-webkit-slider-thumb {
  appearance: none;
  width: 8px;
  height: 17px;
  margin-top: -8px;
  background: #616161;
}
```
FILE: script.js
```js
const letters = 'ABCDEFGHIJKLMNOPQ'.split('');

const filter = '<button class="filter" aria-label="Filter"><svg width="10" height="6" viewBox="0 0 10 6"><path d="M0 0h10L5 6z" fill="#555"/></svg></button>';
const expand = '<button class="expand" aria-label="Expand"><svg width="9" height="9" viewBox="0 0 9 9"><path d="M4.500 0v9M0 4.500h9" stroke="#3a5f8f"/></svg></button>';

const data = {
  A3: { html: '<div class="cell-flex">Category in each month' + filter + '</div>', cls: 'pivot band' },
  B3: { html: 'Sum of Total Sales', cls: 'pivot band' },
  A4: { html: '<div class="cell-flex">' + expand + 'Jan</div>', cls: 'pivot' },
  B4: { html: '19800', cls: 'pivot number' },
  A5: { html: '<div class="cell-flex">' + expand + 'Feb</div>', cls: 'pivot' },
  B5: { html: '14450', cls: 'pivot number' },
  A6: { html: 'Grand Total', cls: 'pivot band total' },
  B6: { html: '34250', cls: 'pivot band total number' },
  B10: { html: '', cls: 'cursor' }
};

let cols = '<col class="col-head">';
let head = '<th class="corner"><svg width="20" height="20" viewBox="0 0 20 20"><path d="M20 0v20H0z" fill="#b2b5b2"/></svg></th>';
letters.forEach(letter => {
  cols += '<col class="' + (letter === 'A' ? 'col-a' : letter === 'B' ? 'col-b' : 'col') + '">';
  head += '<th scope="col"' + (letter === 'B' ? ' class="selected"' : '') + '>' + letter + '</th>';
});

let rows = '';
for (let n = 1; n <= 23; n++) {
  rows += '<tr><th scope="row"' + (n === 10 ? ' class="selected"' : '') + '>' + n + '</th>';
  letters.forEach(letter => {
    const cell = data[letter + n];
    rows += cell ? '<td class="' + cell.cls + '">' + cell.html + '</td>' : '<td></td>';
  });
  rows += '</tr>';
}

document.getElementById('cols').innerHTML = cols;
document.getElementById('letters').innerHTML = head;
document.getElementById('rows').innerHTML = rows;
```
